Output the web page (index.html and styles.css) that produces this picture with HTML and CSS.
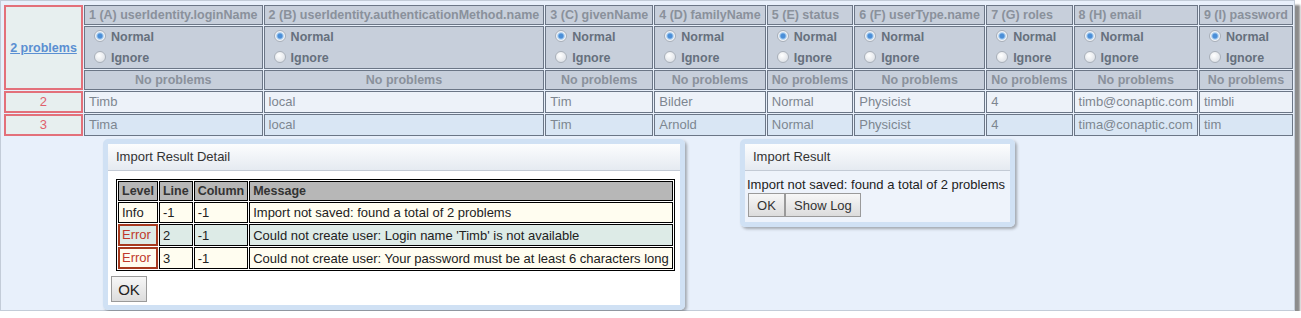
FILE: index.html
```html
<!DOCTYPE html>
<html lang="en">

<head>
    <meta charset="UTF-8">
    <title>User Import</title>
    <link rel="stylesheet" href="styles.css">
</head>

<body>
    <div class="frame">
        <table class="import-grid">
            <tr>
                <td class="row-head problems" rowspan="3"><a href="#">2 problems</a></td>
                <td class="col-title w1">1 (A) userIdentity.loginName</td>
                <td class="col-title w2">2 (B) userIdentity.authenticationMethod.name</td>
                <td class="col-title w3">3 (C) givenName</td>
                <td class="col-title w4">4 (D) familyName</td>
                <td class="col-title w5">5 (E) status</td>
                <td class="col-title w6">6 (F) userType.name</td>
                <td class="col-title w7">7 (G) roles</td>
                <td class="col-title w8">8 (H) email</td>
                <td class="col-title w9">9 (I) password</td>
            </tr>
            <tr>
                <td class="mode"><label><input type="radio" class="radio" name="m1" checked>Normal</label><label><input type="radio" class="radio" name="m1">Ignore</label></td>
                <td class="mode"><label><input type="radio" class="radio" name="m2" checked>Normal</label><label><input type="radio" class="radio" name="m2">Ignore</label></td>
                <td class="mode"><label><input type="radio" class="radio" name="m3" checked>Normal</label><label><input type="radio" class="radio" name="m3">Ignore</label></td>
                <td class="mode"><label><input type="radio" class="radio" name="m4" checked>Normal</label><label><input type="radio" class="radio" name="m4">Ignore</label></td>
                <td class="mode"><label><input type="radio" class="radio" name="m5" checked>Normal</label><label><input type="radio" class="radio" name="m5">Ignore</label></td>
                <td class="mode"><label><input type="radio" class="radio" name="m6" checked>Normal</label><label><input type="radio" class="radio" name="m6">Ignore</label></td>
                <td class="mode"><label><input type="radio" class="radio" name="m7" checked>Normal</label><label><input type="radio" class="radio" name="m7">Ignore</label></td>
                <td class="mode"><label><input type="radio" class="radio" name="m8" checked>Normal</label><label><input type="radio" class="radio" name="m8">Ignore</label></td>
                <td class="mode"><label><input type="radio" class="radio" name="m9" checked>Normal</label><label><input type="radio" class="radio" name="m9">Ignore</label></td>
            </tr>
            <tr>
                <td class="status">No problems</td>
                <td class="status">No problems</td>
                <td class="status">No problems</td>
                <td class="status">No problems</td>
                <td class="status">No problems</td>
                <td class="status">No problems</td>
                <td class="status">No problems</td>
                <td class="status">No problems</td>
                <td class="status">No problems</td>
            </tr>
            <tr class="data odd">
                <td class="row-head line-no">2</td>
                <td>Timb</td>
                <td>local</td>
                <td>Tim</td>
                <td>Bilder</td>
                <td>Normal</td>
                <td>Physicist</td>
                <td>4</td>
                <td>timb@conaptic.com</td>
                <td>timbli</td>
            </tr>
            <tr class="data even">
                <td class="row-head line-no">3</td>
                <td>Tima</td>
                <td>local</td>
                <td>Tim</td>
                <td>Arnold</td>
                <td>Normal</td>
                <td>Physicist</td>
                <td>4</td>
                <td>tima@conaptic.com</td>
                <td>tim</td>
            </tr>
        </table>

        <div class="dialogs">
            <div class="dialog detail">
                <div class="dialog-title">Import Result Detail</div>
                <div class="dialog-body">
                    <table class="log">
                        <tr class="log-head">
                            <td class="lvl">Level</td>
                            <td class="ln">Line</td>
                            <td class="cl">Column</td>
                            <td>Message</td>
                        </tr>
                        <tr class="cream">
                            <td>Info</td>
                            <td>-1</td>
                            <td>-1</td>
                            <td>Import not saved: found a total of 2 problems</td>
                        </tr>
                        <tr class="teal">
                            <td class="error">Error</td>
                            <td>2</td>
                            <td>-1</td>
                            <td>Could not create user: Login name 'Timb' is not available</td>
                        </tr>
                        <tr class="cream">
                            <td class="error">Error</td>
                            <td>3</td>
                            <td>-1</td>
                            <td>Could not create user: Your password must be at least 6 characters long</td>
                        </tr>
                    </table>
                    <button class="btn ok-big">OK</button>
                </div>
            </div>

            <div class="dialog result">
                <div class="dialog-title">Import Result</div>
                <div class="dialog-body">
                    <p class="result-text">Import not saved: found a total of 2 problems</p>
                    <div class="btn-row">
                        <button class="btn">OK</button><button class="btn">Show Log</button>
                    </div>
                </div>
            </div>
        </div>
    </div>
</body>

</html>
```

FILE: styles.css
```css
body {
    margin: 0;
    font-family: 'Liberation Sans', Arial, sans-serif;
    background-color: #ffffff;
}

.frame {
    box-sizing: border-box;
    width: 1295px;
    height: 311px;
    padding: 3px 0 0 2px;
    border: 1px solid #c3ccd8;
    background-color: #e8f0fb;
    box-shadow: 5px 5px 2px #8c8c8c;
}

/* main import grid */
.import-grid {
    border-spacing: 1px;
    font-size: 13px;
}

.import-grid td {
    border: 1px solid #6b7686;
    padding: 0 4px;
    white-space: nowrap;
}

.col-title {
    background-color: #c7cfdb;
    color: #8a919b;
    font-weight: bold;
    font-size: 12.5px;
    line-height: 18px;
}

.w1 { width: 169px; }
.w2 { width: 271px; }
.w3 { width: 98px; }
.w4 { width: 102px; }
.w5 { width: 73px; }
.w6 { width: 122px; }
.w7 { width: 74px; }
.w8 { width: 112px; }
.w9 { width: 84px; }

.import-grid td.row-head {
    border: 2px solid #e3707a;
    background-color: #e7efef;
    text-align: center;
    width: 68px;
}

.problems a {
    color: #5b8fd2;
    font-weight: bold;
    font-size: 12.5px;
}

.import-grid tr.data td.line-no {
    color: #e0606c;
    line-height: 18px;
}

.mode {
    background-color: #c7cfdb;
    color: #66707d;
    font-weight: bold;
    font-size: 12.5px;
}

.mode label {
    display: block;
    line-height: 20px;
}

.mode label:first-child {
    line-height: 21px;
}

.radio {
    appearance: none;
    -webkit-appearance: none;
    box-sizing: border-box;
    width: 12px;
    height: 12px;
    margin: 0 5px 0 5px;
    border: 1px solid #a9b0b9;
    border-radius: 50%;
    background: radial-gradient(circle at 40% 35%, #ffffff, #d5dae1);
    vertical-align: -1px;
}

.radio:checked {
    background: radial-gradient(circle, #4b8fd8 0, #4b8fd8 2px, #a9cdef 3.2px, #f2f5f9 4.4px, #d5dae1 100%);
}

.status {
    background-color: #c7cfdb;
    color: #8a919b;
    font-weight: bold;
    font-size: 12.5px;
    text-align: center;
    line-height: 18px;
}

.data td {
    color: #7d8690;
    line-height: 20px;
}

.odd td {
    background-color: #edf2f9;
}

.even td {
    background-color: #d9e6f4;
}

/* dialogs */
.dialogs {
    display: flex;
    align-items: flex-start;
    gap: 55px;
    margin: 2px 0 0 100px;
}

.dialog {
    border: 5px solid #d0e1f4;
    border-radius: 5px;
    box-shadow: 2px 2px 3px rgba(0, 0, 0, 0.3);
    font-size: 13px;
    color: #222;
}

.dialog-title {
    height: 26px;
    line-height: 26px;
    padding-left: 8px;
    background: linear-gradient(#fcfdfe, #e5eaf1);
    border-bottom: 1px solid #c3cad5;
    color: #333;
}

.detail {
    width: 572px;
}

.detail .dialog-body {
    background-color: #ffffff;
    padding: 8px 4px 3px 3px;
}

.log {
    width: 558px;
    margin-left: 5px;
    border: 1px solid #000;
    border-spacing: 1px;
}

.log td {
    border: 1px solid #000;
    padding: 0 3px;
    line-height: 19px;
    white-space: nowrap;
    color: #222;
}

.log-head td {
    background-color: #b7b7b7;
    font-weight: bold;
    font-size: 12.5px;
    color: #333;
    line-height: 18px;
}

.lvl { width: 34px; }
.ln { width: 24px; }
.cl { width: 47px; }

.cream td {
    background-color: #fffdf0;
}

.teal td {
    background-color: #ddebe7;
}

.log td.error {
    border: 2px solid #a6391e;
    color: #c0392b;
    padding: 0 2px;
    line-height: 18px;
}

.btn {
    font-family: 'Liberation Sans', Arial, sans-serif;
    font-size: 13px;
    color: #222;
    background: linear-gradient(#f7f7f7, #dcdcdc);
    border: 1px solid #9a9a9a;
    height: 24px;
    padding: 0 8px;
    margin: 0;
}

.ok-big {
    display: block;
    margin-top: 5px;
    height: 26px;
    width: 36px;
    padding: 0;
    font-size: 15px;
}

.result {
    width: 265px;
}

.result .dialog-body {
    background-color: #eef3fb;
    padding: 5px 2px 5px 2px;
}

.result-text {
    margin: 0;
    line-height: 17px;
}

.btn-row {
    display: flex;
    margin-left: 1px;
}

.btn-row .btn {
    color: #333;
}

.btn-row .btn:first-child {
    width: 37px;
}
```
